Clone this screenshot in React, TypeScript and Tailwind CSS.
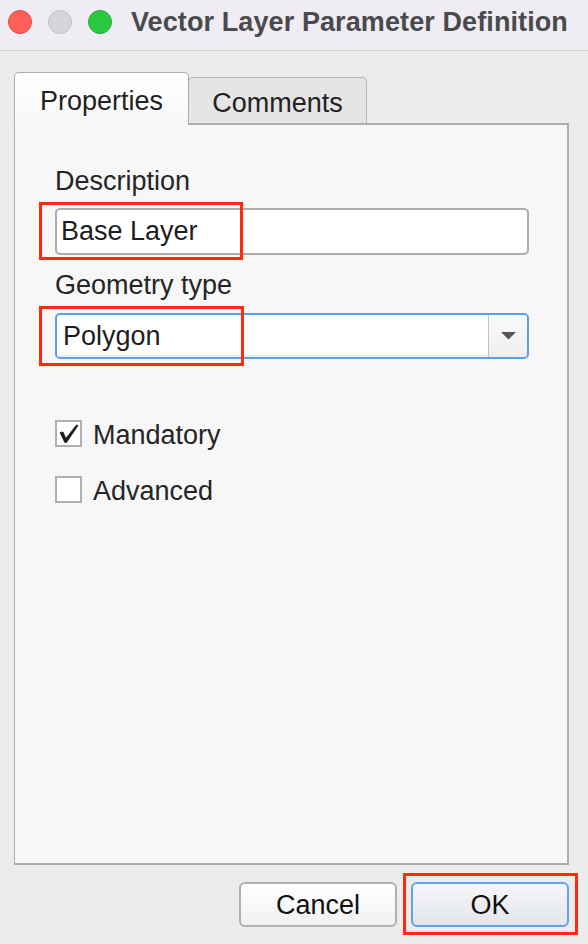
import React from "react";

export default function App() {
  return (
    <div className="relative w-[588px] h-[944px] bg-[#ececec] flex flex-col font-['Liberation_Sans',Arial,sans-serif] text-[#252525] overflow-hidden">
      {/* Title bar */}
      <div className="h-[51px] shrink-0 border-b border-[#d2d1d5] bg-[#efedf3] flex items-center pl-[8px] pb-[7px]">
        <div className="flex gap-[16px]">
          <div className="w-[24px] h-[24px] rounded-full bg-[#fe5f57] border border-[#e2463f]" />
          <div className="w-[24px] h-[24px] rounded-full bg-[#d6d4d9] border border-[#c3c1c6]" />
          <div className="w-[24px] h-[24px] rounded-full bg-[#2ac940] border border-[#1fa934]" />
        </div>
        <div className="ml-[19px] text-[27px] leading-[32px] font-bold text-[#4a4a4c] whitespace-nowrap tracking-[0.1px]">
          Vector Layer Parameter Definition
        </div>
      </div>

      {/* Body */}
      <div className="flex flex-col pl-[14px] pr-[19px] pt-[21px]">
        {/* Tabs */}
        <div className="flex items-start h-[51px] relative z-10">
          <div className="relative z-10 w-[175px] h-[53px] border border-b-0 border-[#adadad] rounded-t-[5px] bg-gradient-to-b from-white to-[#f7f7f7] pt-[12px] text-center text-[27px] leading-[32px] text-[#222]">
            Properties
          </div>
          <div className="ml-[-1px] mt-[5px] w-[179px] h-[46px] border border-b-0 border-[#b4b4b4] rounded-t-[5px] bg-[#e5e5e5] pt-[9px] text-center text-[27px] leading-[32px] text-[#222]">
            Comments
          </div>
        </div>

        {/* Pane */}
        <div className="h-[742px] border-t-2 border-r-2 border-b-2 border-l border-[#adadad] bg-[#f7f7f7] pl-[40px] pr-[38px] pt-[40px] flex flex-col">
          <div className="text-[27px] leading-[32px]">Description</div>
          <div className="mt-[11px] h-[47px] border-2 border-[#acacac] rounded-[5px] bg-white pl-[4px] text-[27px] leading-[43px] text-[#1e1e1e]">
            Base Layer
          </div>
          <div className="mt-[14px] text-[27px] leading-[32px]">Geometry type</div>
          <div className="mt-[12px] h-[46px] border-2 border-[#5c9fe7] rounded-[5px] bg-white flex overflow-hidden">
            <div className="flex-1 pl-[6px] text-[27px] leading-[42px] text-[#1e1e1e] shadow-[inset_0_-2px_0_#e2eefb]">
              Polygon
            </div>
            <div className="w-[39px] border-l border-[#c4c4c4] bg-gradient-to-b from-[#fafafa] to-[#efefef] flex items-center justify-center">
              <svg width="15" height="8" viewBox="0 0 15 8">
                <polygon points="0,0 15,0 7.5,7.5" fill="#555" />
              </svg>
            </div>
          </div>

          <div className="mt-[61px] h-[27px] flex items-center">
            <div className="w-[27px] h-[27px] border-2 border-[#b0b0b0] bg-white flex items-center justify-center">
              <svg width="23" height="23" viewBox="0 0 23 23">
                <path d="M3 10.5 L6 10 L8.8 16.5 L19.5 3 L21 3.5 L9.5 20.5 L7.8 20.5 Z" fill="#1b1b1b" stroke="#1b1b1b" strokeWidth="0.8" strokeLinejoin="round" />
              </svg>
            </div>
            <div className="ml-[11px] text-[27px] leading-[32px] pt-[2px]">Mandatory</div>
          </div>
          <div className="mt-[29px] h-[27px] flex items-center">
            <div className="w-[27px] h-[27px] border-2 border-[#b0b0b0] bg-white" />
            <div className="ml-[11px] text-[27px] leading-[32px] pt-[2px]">Advanced</div>
          </div>
        </div>

        {/* Buttons */}
        <div className="mt-[17px] flex justify-end gap-[14px]">
          <div className="w-[158px] h-[45px] border-2 border-[#b0b0b0] rounded-[6px] bg-gradient-to-b from-white to-[#f1f1f1] flex items-center justify-center text-[27px] leading-[32px] text-[#111]">
            Cancel
          </div>
          <div className="w-[158px] h-[45px] border-2 border-[#62a2e9] rounded-[6px] bg-gradient-to-b from-[#f6f7f9] to-[#e2e5eb] flex items-center justify-center text-[27px] leading-[32px] text-[#111]">
            OK
          </div>
        </div>
      </div>

      {/* Annotation boxes */}
      <div className="absolute left-[39px] top-[202px] w-[204px] h-[58px] border-[3px] border-[#ff2a0a]" />
      <div className="absolute left-[39px] top-[306px] w-[205px] h-[60px] border-[3px] border-[#ff2a0a]" />
      <div className="absolute left-[403px] top-[873px] w-[175px] h-[62px] border-[3px] border-[#ff2a0a]" />
    </div>
  );
}
